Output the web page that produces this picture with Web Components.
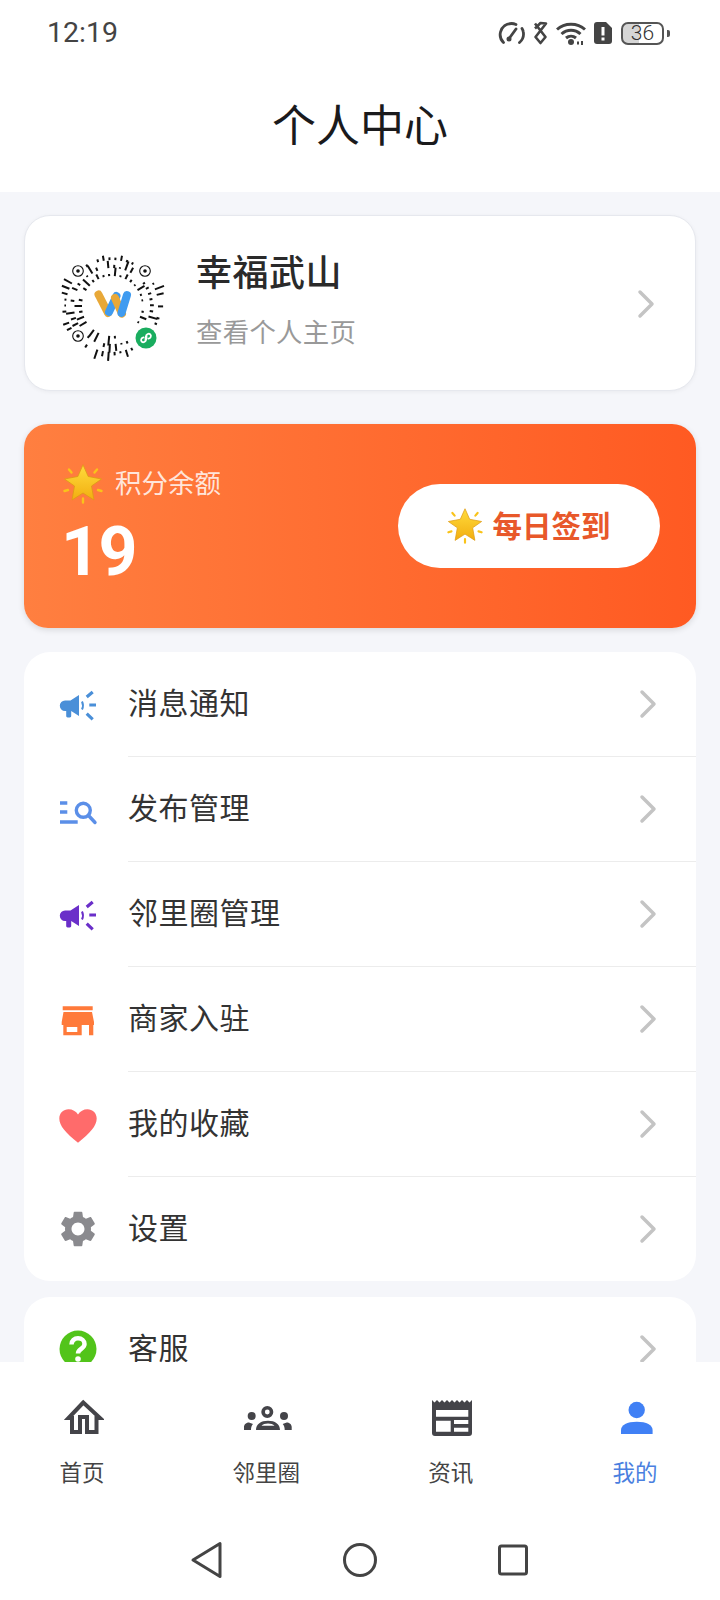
<!DOCTYPE html>
<html lang="zh">
<head>
<meta charset="utf-8">
<title>个人中心</title>
<style>
  html, body { margin: 0; padding: 0; background: #fff; }
  body { font-family: "Noto Sans CJK SC", "Noto Sans", sans-serif; }
</style>
</head>
<body>

<app-shell>
  <status-bar slot="top"></status-bar>
  <title-bar slot="top">个人中心</title-bar>

  <profile-card name="幸福武山" sub="查看个人主页"></profile-card>
  <points-card label="积分余额" value="19" action="每日签到"></points-card>

  <menu-card>
    <menu-row label="消息通知">
      <svg slot="icon" viewBox="0 0 40 40" width="40" height="40"><path fill="#4a8fd8" d="M21 10 12.5 15.5H7a5.2 5.2 0 0 0 0 10.4h1.2v5.2c0 .8.6 1.4 1.4 1.4h2.2c.8 0 1.4-.6 1.4-1.4v-5L21 31Z"/><g fill="none" stroke="#4a8fd8" stroke-width="3.2"><path stroke-width="2" d="M24 16.5q2 4 0 8"/><path d="M28.7 12 34.7 7M31.3 20H38M28.7 28.7l6 5.6"/></g></svg>
    </menu-row>
    <menu-row label="发布管理">
      <svg slot="icon" viewBox="0 0 40 40" width="40" height="40"><g fill="none" stroke="#5b8fe8" stroke-width="3.4"><path d="M2 13h7.3M2 22h7.3M2 32h17.7"/><circle cx="25.3" cy="20.3" r="7"/><path stroke-linecap="round" d="m30.5 25.5 6.5 7"/></g></svg>
    </menu-row>
    <menu-row label="邻里圈管理">
      <svg slot="icon" viewBox="0 0 40 40" width="40" height="40"><path fill="#6a2fc9" d="M21 10 12.5 15.5H7a5.2 5.2 0 0 0 0 10.4h1.2v5.2c0 .8.6 1.4 1.4 1.4h2.2c.8 0 1.4-.6 1.4-1.4v-5L21 31Z"/><g fill="none" stroke="#6a2fc9" stroke-width="3.2"><path stroke-width="2" d="M24 16.5q2 4 0 8"/><path d="M28.7 12 34.7 7M31.3 20H38M28.7 28.7l6 5.6"/></g></svg>
    </menu-row>
    <menu-row label="商家入驻">
      <svg slot="icon" viewBox="0 0 40 40" width="40" height="40"><path fill="#ff7a3a" d="M4.7 6.3h30v4h-30ZM5.5 12H34l2 10v3H3.7v-3Z"/><path fill="#ff7a3a" fill-rule="evenodd" d="M5.3 25h30v10.3h-4.3V25h-7.3v10.3H5.3ZM8.7 27v5h10.6v-5Z"/></svg>
    </menu-row>
    <menu-row label="我的收藏">
      <svg slot="icon" viewBox="0 0 40 40" width="40" height="40"><path fill="#ff6b6b" d="M20 37.7C8 28 1.3 21 1.3 13.5 1.3 8 5.6 4.3 10.5 4.3c4 0 7.5 2 9.5 5.2 2-3.2 5.5-5.2 9.5-5.2 4.9 0 9.2 3.7 9.2 9.2 0 7.5-6.7 14.5-18.7 24.2Z"/></svg>
    </menu-row>
    <menu-row label="设置" last>
      <svg slot="icon" viewBox="0.9 0.9 22.2 22.2" width="40" height="40"><path fill="#8a8a8e" d="M19.14 12.94c.04-.3.06-.61.06-.94 0-.32-.02-.64-.07-.94l2.03-1.58c.18-.14.23-.41.12-.61l-1.92-3.32c-.12-.22-.37-.29-.59-.22l-2.39.96c-.5-.38-1.03-.7-1.62-.94l-.36-2.54c-.04-.24-.24-.41-.48-.41h-3.84c-.24 0-.43.17-.47.41l-.36 2.54c-.59.24-1.13.57-1.62.94l-2.39-.96c-.22-.08-.47 0-.59.22L2.74 8.87c-.12.21-.08.47.12.61l2.03 1.58c-.05.3-.09.63-.09.94s.02.64.07.94l-2.03 1.58c-.18.14-.23.41-.12.61l1.92 3.32c.12.22.37.29.59.22l2.39-.96c.5.38 1.03.7 1.62.94l.36 2.54c.05.24.24.41.48.41h3.84c.24 0 .44-.17.47-.41l.36-2.54c.59-.24 1.13-.56 1.62-.94l2.39.96c.22.08.47 0 .59-.22l1.92-3.32c.12-.22.07-.47-.12-.61l-2.01-1.58zM12 15.6c-1.98 0-3.6-1.62-3.6-3.6s1.62-3.6 3.6-3.6 3.6 1.62 3.6 3.6-1.62 3.6-3.6 3.6z"/></svg>
    </menu-row>
  </menu-card>

  <menu-card class="second">
    <menu-row label="客服" last>
      <svg slot="icon" viewBox="0 0 40 40" width="40" height="40"><circle cx="20" cy="20" r="18.5" fill="#52c41a"/><path fill="none" stroke="#fff" stroke-width="4.5" d="M13.5 15.5c0-3.800 2.900-6.200 6.500-6.200s6.500 2.300 6.500 5.700c0 4.800-6.500 5-6.500 9.500"/><circle cx="20" cy="30" r="2.800" fill="#fff"/></svg>
    </menu-row>
  </menu-card>

  <tab-bar slot="bottom">
    <tab-item label="首页">
      <svg slot="icon" viewBox="0 0 44 44" width="44" height="44"><path fill="none" stroke="#444449" stroke-width="4" d="M23.3 6.500 8.500 22H12v14h8V21h7v15h9.500V22h3.500Z"/></svg>
    </tab-item>
    <tab-item label="邻里圈">
      <svg slot="icon" viewBox="0 0 52 44" width="52" height="44"><g fill="#444449"><circle cx="27.3" cy="16" r="4.200" fill="none" stroke="#444449" stroke-width="3.600"/><circle cx="11.700" cy="20" r="4"/><circle cx="44" cy="20" r="4"/><path d="M4 34v-3c0-3 2.500-4.500 5-4.600l4 1.600c-1.500 1.700-2 3.500-2 6ZM51.700 34v-3c0-3-2.500-4.500-5-4.600l-4 1.600c1.500 1.700 2 3.500 2 6Z"/><path fill-rule="evenodd" d="M16 34c0-6 5-9.300 12-9.300s12 3.300 12 9.300ZM21.500 29.700h13c-1.500-1.500-3.500-2.200-6.500-2.200s-5 .7-6.500 2.200Z"/></g></svg>
    </tab-item>
    <tab-item label="资讯">
      <svg slot="icon" viewBox="0 0 44 44" width="44" height="44"><path fill="#444449" fill-rule="evenodd" d="M3 4l2.500 2.500L8 4l2.500 2.500L13 4l2.500 2.500L18 4l2.500 2.500L23 4l2.500 2.500L28 4l2.500 2.500L33 4l2.500 2.500L38 4l2.500 2.500L43 4v33a3 3 0 0 1-3 3H6a3 3 0 0 1-3-3ZM7 14v6.700h32.300V14ZM7 24.700v11h14.700v-11ZM25 24v4h14.300v-4ZM25 31.700v4h14.300v-4Z"/></svg>
    </tab-item>
    <tab-item label="我的" active>
      <svg slot="icon" viewBox="0 0 44 44" width="44" height="44"><g fill="#4080f5"><circle cx="23.700" cy="14" r="8.200"/><path d="M8 38v-4c0-5 6-8.300 15.800-8.300s15.800 3.300 15.800 8.300v4Z"/></g></svg>
    </tab-item>
  </tab-bar>
  <nav-keys slot="bottom"></nav-keys>
</app-shell>

<script>
function defineSimple(name, html, setup) {
  customElements.define(name, class extends HTMLElement {
    constructor() {
      super();
      this.attachShadow({ mode: 'open' });
    }
    connectedCallback() {
      this.shadowRoot.innerHTML = html(this);
      if (setup) setup(this);
    }
  });
}

const CJK = '"Noto Sans CJK SC", "Noto Sans", sans-serif';

defineSimple('app-shell', () => `
  <style>
    :host { display: flex; flex-direction: column; width: 720px; height: 1600px; overflow: hidden; background: #fff; font-family: ${CJK}; }
    .top { flex: none; background: #fff; }
    main { flex: 1; min-height: 0; overflow: hidden; background: #f5f6fa; padding: 23px 24px 0; display: flex; flex-direction: column; }
    .bottom { flex: none; background: #fff; }
  </style>
  <div class="top"><slot name="top"></slot></div>
  <main><slot></slot></main>
  <div class="bottom"><slot name="bottom"></slot></div>
`);

defineSimple('status-bar', () => `
  <style>
    :host { display: flex; align-items: center; justify-content: space-between; height: 66px; padding: 0 50px 0 47px; color: #444; }
    .time { font: 400 28.5px/68px Roboto, sans-serif; }
    .icons { display: flex; align-items: center; gap: 8px; }
    svg { display: block; }
    .batt { display: flex; box-sizing: border-box; width: 43px; height: 23px; border: 2px solid #555; border-radius: 7px; margin-left: 1px; align-items: center; justify-content: center; background: linear-gradient(90deg, #d6d6d6 40%, transparent 40%); }
    .num { font: 300 21px/19px Roboto, sans-serif; color: #333; }
    .tip { width: 3px; height: 7px; background: #555; border-radius: 0 2px 2px 0; margin-left: -5px; }
  </style>
  <span class="time">12:19</span>
  <div class="icons">
    <svg width="27" height="24" viewBox="0 0 27 24"><g fill="none" stroke="#444" stroke-width="2.800" stroke-linecap="round"><path d="M5.500 21.500C2.500 18.500 1.500 15 2.500 11 4 5.500 8.500 2.500 13.500 2.500c1.800 0 3 .3 4.500 1"/><path d="M21.500 21.500c3-2.500 4.500-6.500 3.800-10.500-.2-1.500-.7-2.500-1.300-3.500"/><path d="M11.500 17 18 8"/></g><circle cx="11" cy="18" r="2.500" fill="#444"/></svg>
    <svg width="15" height="24" viewBox="0 0 15 24"><path fill="none" stroke="#444" stroke-width="2.600" d="M2 2.500 12.500 16 7.500 22 2.500 16 13 2.500 7.500 2 2 7.500" stroke-linejoin="round"/></svg>
    <svg width="30" height="24" viewBox="0 0 30 24"><g fill="none" stroke="#444" stroke-width="3"><path d="M1 8.500C8.500 1.500 21.500 1.500 29 8.500"/><path d="M5.500 13c5.500-5 13.500-5 19 0"/><path d="M10 17c3-2.500 7-2.500 10 0"/></g><circle cx="15" cy="21" r="3" fill="#444"/><path fill="#444" d="M21 20.500h2v3h-2ZM25 20h2v4h-2Z"/></svg>
    <svg width="18" height="22" viewBox="0 0 18 22"><path fill="#444" d="M3 0h9l6 6v13a3 3 0 0 1-3 3H3a3 3 0 0 1-3-3V3a3 3 0 0 1 3-3Z"/><path fill="#fff" d="M7.500 5h3v8.500h-3ZM7.500 15.500h3v3h-3Z"/></svg>
    <div class="batt"><span class="num">36</span></div>
    <span class="tip"></span>
  </div>
`);

defineSimple('title-bar', () => `
  <style>
    :host { display: block; height: 126px; text-align: center; font-family: ${CJK}; font-weight: 400; font-size: 44px; line-height: 114px; color: #1a1a1c; }
  </style>
  <slot></slot>
`);

defineSimple('glow-star', (el) => `
  <style>
    :host { display: inline-flex; flex: none; }
    svg { display: block; }
  </style>
  <svg width="${el.getAttribute('size')}" height="${el.getAttribute('size')}" viewBox="0 0 40 40">
    <defs><linearGradient id="g" x1="0" y1="0" x2="0" y2="1"><stop offset="0" stop-color="#ffdb3c"/><stop offset="1" stop-color="#f2ae10"/></linearGradient></defs>
    <path fill="url(#g)" stroke="#dd9a14" stroke-width=".8" stroke-linejoin="round" d="M20 .8l5.200 11.700L38.500 15l-10 7 2.500 14-11-7-11 7 2.500-14-10-7 13.300-2.500Z"/>
    <g stroke="#f9c31a" stroke-width="2.400" stroke-linecap="round"><path d="M6 5.500l2.500 3M34 5.500l-2.500 3M1.500 27l3.500-1M38.500 27l-3.500-1M20 34.500v4"/></g>
  </svg>
`);

defineSimple('qr-code', () => `
  <style>
    :host { display: block; width: 110px; height: 110px; flex: none; margin-top: 5px; }
    svg { display: block; }
  </style>
  <svg id="qr" width="110" height="110" viewBox="0 0 110 110"></svg>
`, (el) => {
  // seeded, so the dashes land in the same places on every run
  let seed = 29;
  const rnd = () => (seed = (seed * 16807) % 2147483647) / 2147483647;
  const finders = [[21, 20], [88, 20], [21, 85]];
  let rays = '';
  [30, 38, 46].forEach((r, ring) => {
    const count = 34 + ring * 8;
    for (let i = 0; i < count; i++) {
      const a = (i / count) * Math.PI * 2 + ring * .13;
      if (rnd() < .18) continue;
      const len = rnd() < .35 ? 5 + rnd() * 5 : 1.5 + rnd() * 2.5;
      const x1 = 55 + Math.cos(a) * r, y1 = 55 + Math.sin(a) * r;
      const x2 = 55 + Math.cos(a) * (r + len), y2 = 55 + Math.sin(a) * (r + len);
      const blocked = finders.some(([fx, fy]) => Math.hypot(x2 - fx, y2 - fy) < 9.5 || Math.hypot(x1 - fx, y1 - fy) < 9.5)
        || Math.hypot(x2 - 89, y2 - 87) < 13.5 || Math.hypot(x1 - 89, y1 - 87) < 13.5;
      if (blocked) continue;
      rays += `<line x1="${x1.toFixed(1)}" y1="${y1.toFixed(1)}" x2="${x2.toFixed(1)}" y2="${y2.toFixed(1)}"/>`;
    }
  });
  const rings = finders.map(([x, y]) => `<circle cx="${x}" cy="${y}" r="5.3" fill="none" stroke="#111" stroke-width="1.1"/><circle cx="${x}" cy="${y}" r="1.8" fill="#111"/>`).join('');
  el.shadowRoot.getElementById('qr').innerHTML = `
    <g stroke="#111" stroke-width="2">${rays}</g>
    ${rings}
    <g fill="none" stroke-width="8" stroke-linecap="round">
      <path stroke="#e8a838" d="M41.500 43.500 51 62"/>
      <path stroke="#3f9bf0" d="M52 61l7.500-16"/>
      <path stroke="#e8a838" d="M58 47l7 15.500"/>
      <path stroke="#3f9bf0" d="M64.500 62 70 44"/>
    </g>
    <circle cx="89" cy="87" r="10.500" fill="#1aad5f"/>
    <path fill="none" stroke="#fff" stroke-width="1.800" stroke-linecap="round" d="M89.500 84c.2 3-.2 6-2.200 7-2 .8-3.800-1-3-3 .4-1 1.200-1.500 2.200-1.700M88.500 90c-.2-3 .2-6 2.200-7 2-.8 3.800 1 3 3-.4 1-1.200 1.500-2.200 1.700"/>
  `;
});

defineSimple('chev-right', () => `
  <style>
    :host { display: block; width: 18px; height: 30px; flex: none; }
    svg { display: block; }
  </style>
  <svg width="18" height="30" viewBox="0 0 18 30"><path fill="none" stroke="#c4c4c4" stroke-width="3.500" stroke-linecap="round" stroke-linejoin="round" d="M3 3 15 15 3 27"/></svg>
`);

defineSimple('profile-card', (el) => `
  <style>
    :host { display: flex; align-items: center; height: 176px; box-sizing: border-box; border: 1px solid #e6e8ee; border-radius: 26px; background: #fff; padding: 0 40px 0 32px; box-shadow: 0 1px 4px rgba(0,0,0,.05); flex: none; font-family: ${CJK}; }
    .info { flex: 1; margin-left: 29px; display: flex; flex-direction: column; gap: 17px; padding-bottom: 11px; }
    .name { font-size: 36px; line-height: 50px; font-weight: 500; color: #2a2a2a; letter-spacing: .5px; }
    .sub { font-size: 26.4px; line-height: 38px; color: #999; letter-spacing: .3px; }
    chev-right { margin-top: 2px; }
  </style>
  <qr-code></qr-code>
  <div class="info">
    <span class="name">${el.getAttribute('name')}</span>
    <span class="sub">${el.getAttribute('sub')}</span>
  </div>
  <chev-right></chev-right>
`);

defineSimple('points-card', (el) => `
  <style>
    :host { display: flex; align-items: center; justify-content: space-between; height: 204px; margin-top: 33px; box-sizing: border-box; border-radius: 24px; padding: 0 36px 0 39px; background: linear-gradient(90deg, #ff7f40, #ff5a22); box-shadow: 0 2px 6px rgba(0,0,0,.12); flex: none; font-family: ${CJK}; color: #fff; }
    .left { display: flex; flex-direction: column; }
    .label { display: flex; align-items: center; gap: 12px; font-size: 26.5px; line-height: 38px; color: rgba(255,255,255,.82); }
    .label span { padding-bottom: 4px; }
    .value { font: 700 68px/76px Roboto, "Noto Sans", sans-serif; margin: 9px 0 0 -2px; letter-spacing: -1.5px; }
    .btn { display: flex; align-items: center; justify-content: center; gap: 9px; width: 262px; height: 84px; border-radius: 42px; background: #fff; color: #e8582a; font-size: 29.5px; font-weight: 700; }
    .btn span { padding-bottom: 4px; }
  </style>
  <div class="left">
    <div class="label"><glow-star size="40"></glow-star><span>${el.getAttribute('label')}</span></div>
    <div class="value">${el.getAttribute('value')}</div>
  </div>
  <div class="btn"><glow-star size="36"></glow-star><span>${el.getAttribute('action')}</span></div>
`);

defineSimple('menu-card', (el) => `
  <style>
    :host { display: block; flex: none; border-radius: 26px; background: #fff; margin-top: ${el.classList.contains('second') ? 16 : 24}px; overflow: hidden; }
  </style>
  <slot></slot>
`);

defineSimple('menu-row', (el) => `
  <style>
    :host { display: flex; align-items: center; height: ${el.hasAttribute('last') ? 104 : 105}px; padding-left: 34px; font-family: ${CJK}; }
    .icon { display: flex; width: 40px; height: 40px; flex: none; }
    .body { flex: 1; height: 100%; box-sizing: border-box; margin-left: 30px; padding-right: 39px; display: flex; align-items: center; justify-content: space-between; border-bottom: ${el.hasAttribute('last') ? 0 : 1}px solid #ececec; }
    .text { font-size: 30px; letter-spacing: .5px; color: #333; padding-bottom: 6px; }
  </style>
  <span class="icon"><slot name="icon"></slot></span>
  <div class="body"><span class="text">${el.getAttribute('label')}</span><chev-right></chev-right></div>
`);

defineSimple('tab-bar', () => `
  <style>
    :host { display: flex; justify-content: space-between; height: 148px; box-sizing: border-box; padding: 34px 25px 0 22px; background: #fff; }
  </style>
  <slot></slot>
`);

defineSimple('tab-item', (el) => `
  <style>
    :host { display: flex; flex-direction: column; align-items: center; width: 120px; font-family: ${CJK}; }
    .icon { display: flex; height: 44px; }
    .label { margin-top: 16px; font-size: 22.5px; line-height: 30px; color: ${el.hasAttribute('active') ? '#4a7fe0' : '#444'}; }
  </style>
  <span class="icon"><slot name="icon"></slot></span>
  <span class="label">${el.getAttribute('label')}</span>
`);

defineSimple('nav-keys', () => `
  <style>
    :host { display: flex; justify-content: center; gap: 113px; height: 90px; box-sizing: border-box; padding-top: 30px; background: #fff; }
    svg { display: block; }
  </style>
  <svg width="40" height="40" viewBox="0 0 40 40"><path fill="none" stroke="#444" stroke-width="3" stroke-linejoin="round" d="M6 20 33 3.500v33Z"/></svg>
  <svg width="40" height="40" viewBox="0 0 40 40"><circle cx="20" cy="20" r="15.500" fill="none" stroke="#444" stroke-width="3"/></svg>
  <svg width="40" height="40" viewBox="0 0 40 40"><rect x="6.500" y="6" width="27" height="28" rx="2" fill="none" stroke="#444" stroke-width="3"/></svg>
`);
</script>
</body>
</html>
